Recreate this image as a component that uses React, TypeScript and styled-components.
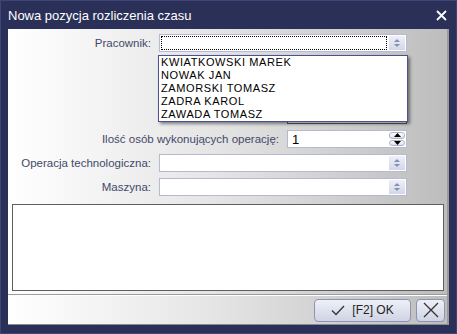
import React from "react";
import styled, { createGlobalStyle } from "styled-components";

const Global = createGlobalStyle`
  html, body { margin: 0; padding: 0; overflow: hidden; background: #2a3058; }
  * { box-sizing: border-box; }
`;

const Window = styled.div`
  width: 457px;
  height: 334px;
  background: #2a3058;
  border: 1px solid #3c4478;
  display: flex;
  flex-direction: column;
  font-family: "Liberation Sans", "DejaVu Sans", sans-serif;
`;

const TitleBar = styled.div`
  height: 28px;
  display: flex;
  align-items: center;
  justify-content: space-between;
  padding: 0 9px 0 7px;
  color: #ffffff;
  font-size: 13px;
`;

const Client = styled.div`
  margin: 0 7px 0 7px;
  width: 441px;
  height: 296px;
  display: flex;
  flex-direction: column;
  background: linear-gradient(to right, #ffffff 0%, #e6e6e6 45%, #bdbdbd 100%);
  border-right: 2px solid #9a9a9a;
`;

const Form = styled.div`
  position: relative;
  display: flex;
  flex-direction: column;
  gap: 6px;
  padding: 5px 40px 0 0;
`;

const Row = styled.div`
  height: 18px;
  display: flex;
  align-items: center;
  justify-content: flex-end;
  gap: 8px;
`;

const Label = styled.span`
  font-size: 11.5px;
  color: #44486a;
  white-space: nowrap;
`;

const Field = styled.div<{ $w: number; $dark?: boolean }>`
  width: ${(p) => p.$w}px;
  height: 18px;
  background: #ffffff;
  border: 1px solid ${(p) => (p.$dark ? "#5a5a5a" : "#b4bad2")};
  display: flex;
  align-items: stretch;
  padding: 1px;
`;

const Focus = styled.div`
  flex: 1;
  border: 1px dotted #000;
  margin-right: 2px;
`;

const Text = styled.div`
  flex: 1;
  font-size: 13px;
  color: #000;
  padding-left: 3px;
  line-height: 15px;
`;

const ComboBtn = styled.div`
  width: 16px;
  background: linear-gradient(to bottom, #eef0f8, #d2d7e8);
  display: flex;
  align-items: center;
  justify-content: center;
`;

const SpinCol = styled.div`
  width: 16px;
  display: flex;
  flex-direction: column;
  gap: 1px;
`;

const SpinBtn = styled.div`
  flex: 1;
  border: 1px solid #b0b4c6;
  border-radius: 3px;
  background: linear-gradient(to bottom, #ffffff, #dcdfe9);
  display: flex;
  align-items: center;
  justify-content: center;
`;

const DropList = styled.div`
  position: absolute;
  left: 150px;
  top: 26px;
  width: 250px;
  height: 67px;
  background: #ffffff;
  border: 1px solid #4a5090;
  box-shadow: 2px 2px 3px rgba(0, 0, 0, 0.45);
  z-index: 2;
`;

const Item = styled.div`
  height: 13px;
  line-height: 13px;
  font-size: 11px;
  letter-spacing: 0.6px;
  padding-left: 2px;
  color: #000;
  font-family: "Liberation Sans", sans-serif;
`;

const Memo = styled.div`
  margin: 8px 3px 0 4px;
  height: 87px;
  background: #ffffff;
  border: 1px solid #5e5e5e;
`;

const Separator = styled.div`
  margin-top: 3px;
  height: 2px;
  border-top: 1px solid #9c9c9c;
  border-bottom: 1px solid #ffffff;
`;

const ButtonBar = styled.div`
  flex: 1;
  display: flex;
  justify-content: flex-end;
  align-items: center;
  gap: 5px;
  padding: 0 2px 0 0;
  border-bottom: 1px solid #8a8a8a;
`;

const Button = styled.div<{ $w: number }>`
  width: ${(p) => p.$w}px;
  height: 23px;
  border: 1px solid #8d93b3;
  border-radius: 4px;
  background: linear-gradient(to bottom, #eef0f8 0%, #dfe2ee 50%, #cfd3e3 100%);
  display: flex;
  align-items: center;
  justify-content: center;
  gap: 7px;
  font-size: 12px;
  color: #222;
`;

const Arrows = () => (
  <svg width="8" height="10" viewBox="0 0 8 10">
    <path d="M4 1 L7 4 L1 4 Z" fill="#8490b0" />
    <path d="M4 9 L7 6 L1 6 Z" fill="#8490b0" />
  </svg>
);

const Combo = ({ w, focus }: { w: number; focus?: boolean }) => (
  <Field $w={w}>
    {focus ? <Focus /> : <Text />}
    <ComboBtn>
      <Arrows />
    </ComboBtn>
  </Field>
);

const people = [
  "KWIATKOWSKI MAREK",
  "NOWAK JAN",
  "ZAMORSKI TOMASZ",
  "ZADRA KAROL",
  "ZAWADA TOMASZ",
];

export default function App() {
  return (
    <>
      <Global />
      <Window>
        <TitleBar>
          <span>Nowa pozycja rozliczenia czasu</span>
          <svg width="11" height="11" viewBox="0 0 11 11">
            <path d="M1 1 L10 10 M10 1 L1 10" stroke="#fff" strokeWidth="1.8" />
          </svg>
        </TitleBar>
        <Client>
          <Form>
            <Row>
              <Label>Pracownik:</Label>
              <Combo w={248} focus />
            </Row>
            <Row />
            <Row />
            <Row>
              <Field $w={120} $dark />
            </Row>
            <Row>
              <Label>Ilość osób wykonujących operację:</Label>
              <Field $w={120}>
                <Text>1</Text>
                <SpinCol>
                  <SpinBtn>
                    <svg width="7" height="4" viewBox="0 0 7 4">
                      <path d="M3.5 0 L7 4 L0 4 Z" fill="#000" />
                    </svg>
                  </SpinBtn>
                  <SpinBtn>
                    <svg width="7" height="4" viewBox="0 0 7 4">
                      <path d="M3.5 4 L7 0 L0 0 Z" fill="#000" />
                    </svg>
                  </SpinBtn>
                </SpinCol>
              </Field>
            </Row>
            <Row>
              <Label>Operacja technologiczna:</Label>
              <Combo w={248} />
            </Row>
            <Row>
              <Label>Maszyna:</Label>
              <Combo w={248} />
            </Row>
            <DropList>
              {people.map((p) => (
                <Item key={p}>{p}</Item>
              ))}
            </DropList>
          </Form>
          <Memo />
          <Separator />
          <ButtonBar>
            <Button $w={97}>
              <svg width="14" height="11" viewBox="0 0 14 11">
                <path d="M1 5.5 L5 9.5 L13 1" stroke="#333" strokeWidth="1.3" fill="none" />
              </svg>
              <span>[F2] OK</span>
            </Button>
            <Button $w={29}>
              <svg width="16" height="16" viewBox="0 0 16 16">
                <path d="M1 1 L15 15 M15 1 L1 15" stroke="#333" strokeWidth="1.3" />
              </svg>
            </Button>
          </ButtonBar>
        </Client>
      </Window>
    </>
  );
}
